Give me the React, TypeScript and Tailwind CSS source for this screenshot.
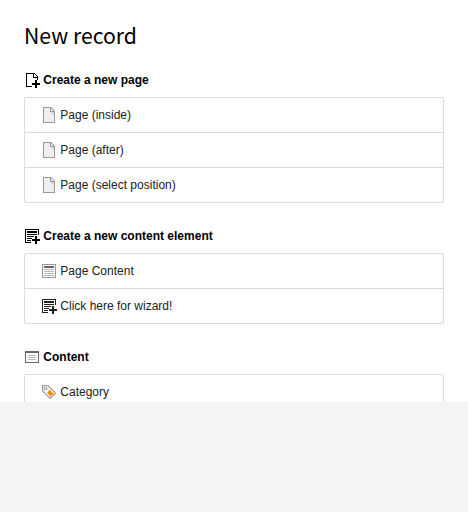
import type { ReactNode } from 'react';

const svgProps = { width: 16, height: 16, viewBox: '0 0 16 16', className: 'block shrink-0' };

const PageAddIcon = () => (
  <svg {...svgProps} shapeRendering="crispEdges">
    <path fill="#000" d="M2 1h9v1H3v12h5v1H2zM9 2h1v3h3v1H9zM11 2h1v1h-1zM12 3h1v1h-1zM13 4h1v4h-1zM11 8h2v3h3v2h-3v3h-2v-3H8v-2h3z" />
  </svg>
);

const ContentAddIcon = () => (
  <svg {...svgProps} shapeRendering="crispEdges">
    <path fill="currentColor" d="M1 1h14v6h-1V2H2v12h5v1H1zM3 3h10v2H3zM3 6h10v1H3zM3 8h7v1H3zM3 10h5v1H3zM3 12h4v1H3zM11 8h2v3h3v2h-3v3h-2v-3H8v-2h3z" />
  </svg>
);

const PageIcon = () => (
  <svg {...svgProps}>
    <path fill="#999" d="M2 0v16h12V4l-4-4z" />
    <path fill="#efefef" d="M3 1v14h10V5H9V1z" />
    <path fill="#fff" d="M10 1.4v2.6h2.6z" />
    <path fill="#999" d="M9 1h1v3h3v1H9z" opacity=".65" />
    <path fill="#ccc" d="M9 5h4v4z" opacity=".65" />
  </svg>
);

const ContentIcon = () => (
  <svg {...svgProps} shapeRendering="crispEdges">
    <path fill="#999" d="M1 1h14v14H1z" />
    <path fill="#fff" d="M2 2h12v12H2z" />
    <path fill="#666" d="M3 3h10v2H3z" />
    <path fill="#b9b9b9" d="M3 6h10v1H3zM3 8h10v1H3zM3 10h10v1H3zM3 12h10v1H3z" />
  </svg>
);

const PanelIcon = () => (
  <svg {...svgProps} shapeRendering="crispEdges">
    <path fill="#666" d="M1 2h14v12H1z" />
    <path fill="#fff" d="M2 4h12v9H2z" />
    <path fill="#b9b9b9" d="M4 6h8v1H4zM4 8h8v1H4zM4 10h8v1H4z" />
  </svg>
);

const CategoryIcon = () => (
  <svg {...svgProps}>
    <path fill="#fff" stroke="#999" strokeWidth="1.15" d="M1.5 1.5h5.3l7.7 7.7-5.3 5.3-7.7-7.7z" />
    <circle cx="4.5" cy="4.5" r="1.5" fill="#fff" stroke="#999" strokeWidth="1.1" />
    <path fill="#ff8700" d="M8.8 6l3.7 3.5-3 3L6 8.8z" />
  </svg>
);

type Row = { icon: ReactNode; label: string };

function Section({ icon, title, rows }: { icon: ReactNode; title: string; rows: Row[] }) {
  return (
    <section className="mb-[25px]">
      <h2 className="mb-[9px] flex h-4 items-center gap-[3.33px] text-[12px] font-bold leading-4 text-black">
        {icon}
        <span>{title}</span>
      </h2>
      <ul className="divide-y divide-[#dcdcdc] rounded-[2px] border border-[#dcdcdc] bg-white">
        {rows.map((row) => (
          <li key={row.label} className="flex h-[35px] items-center gap-[3.33px] pl-4 text-[12px] text-[#212121] last:h-[34px]">
            {row.icon}
            <span>{row.label}</span>
          </li>
        ))}
      </ul>
    </section>
  );
}

export default function App() {
  return (
    <div className="h-[512px] overflow-hidden bg-[#f4f4f4] font-['Liberation_Sans',Arial,sans-serif]">
      <main className="h-[402px] overflow-hidden bg-white px-6 pt-[23px]">
        <h1 className="mb-[25px] h-6 text-[21.2px] leading-6 text-black font-['Noto_Sans_CJK_JP',sans-serif]">New record</h1>
        <Section
          icon={<PageAddIcon />}
          title="Create a new page"
          rows={[
            { icon: <PageIcon />, label: 'Page (inside)' },
            { icon: <PageIcon />, label: 'Page (after)' },
            { icon: <PageIcon />, label: 'Page (select position)' },
          ]}
        />
        <Section
          icon={<ContentAddIcon />}
          title="Create a new content element"
          rows={[
            { icon: <ContentIcon />, label: 'Page Content' },
            { icon: <ContentAddIcon />, label: 'Click here for wizard!' },
          ]}
        />
        <Section icon={<PanelIcon />} title="Content" rows={[{ icon: <CategoryIcon />, label: 'Category' }]} />
      </main>
    </div>
  );
}
